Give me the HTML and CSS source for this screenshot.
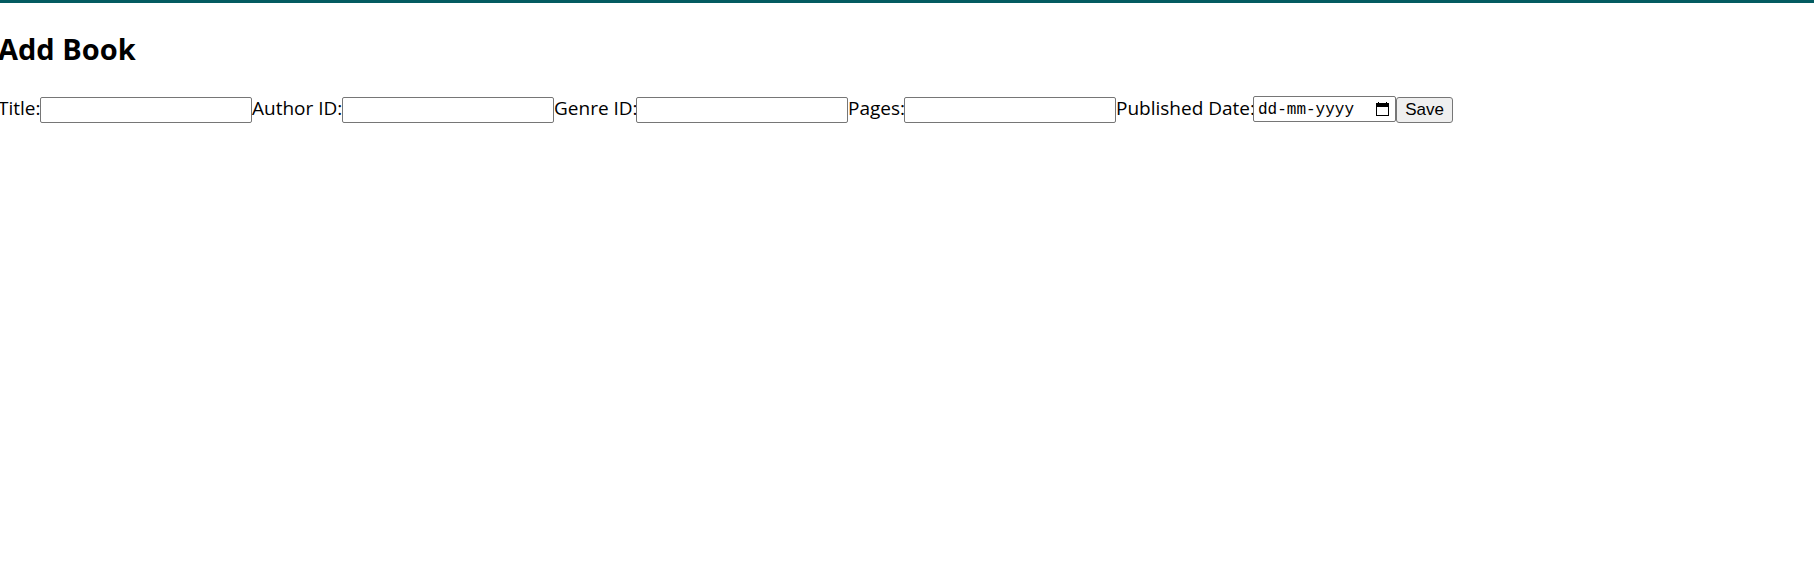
FILE: index.html
```html
<!DOCTYPE html>
<html lang="en">
<head>
<meta charset="utf-8">
<title>Add Book</title>
<link rel="stylesheet" href="styles.css">
</head>
<body class="page">
<main class="content">
<h2 class="heading">Add Book</h2>
<form class="book-form">
<label class="label label-title" for="title">Title:</label><input class="field" id="title" type="text">
<label class="label label-author" for="author">Author ID:</label><input class="field" id="author" type="text">
<label class="label label-genre" for="genre">Genre ID:</label><input class="field" id="genre" type="text">
<label class="label label-pages" for="pages">Pages:</label><input class="field" id="pages" type="text">
<label class="label label-date" for="published">Published Date:</label>
<div class="date-box">
<input class="date-input" id="published" type="text" placeholder="dd-mm-yyyy">
<button class="date-picker" type="button" aria-label="Choose date"><svg class="date-icon" viewBox="0 0 13 14" width="13" height="14"><path fill="#000" fill-rule="evenodd" d="M2 0h1v1h7V0h1v1h2v13H0V1h2zM1 5v8h11V5z"/></svg></button>
</div>
<button class="save" type="submit">Save</button>
</form>
</main>
</body>
</html>
```
FILE: styles.css
```css
.page {
  margin: 0;
  background: #fff;
  color: #000;
  font: 19px/26px "Segoe UI", "Open Sans", sans-serif;
  border-top: 3px solid #035b61;
}
.content {
  margin-left: -2px;
  padding-top: 26px;
}
.heading {
  margin: 0;
  font-size: 29px;
  line-height: 40px;
  font-weight: 700;
}
.book-form {
  display: flex;
  align-items: center;
  margin-top: 28px;
  white-space: nowrap;
}
.label {
  flex: none;
  margin-top: -4px;
}
.label-title { width: 42px; }
.label-author { width: 90px; }
.label-genre { width: 82px; }
.label-pages { width: 56px; }
.label-date { width: 137px; }
.field,
.date-box,
.save {
  box-sizing: border-box;
  flex: none;
  height: 26px;
  border: 1px solid #767676;
  border-radius: 2px;
}
.field {
  width: 212px;
  margin: 0;
  padding: 1px 3px;
  font: 16px "Liberation Sans", Arial, sans-serif;
}
.date-box {
  display: flex;
  align-items: center;
  width: 143px;
  margin-top: -2px;
}
.date-input {
  flex: 1;
  min-width: 0;
  padding: 2px 0 0 4px;
  border: 0;
  background: none;
  font: 16px "Liberation Mono", monospace;
}
.date-input::placeholder {
  color: #000;
  opacity: 1;
}
.date-picker {
  display: flex;
  padding: 0;
  margin-right: 6px;
  border: 0;
  background: none;
}
.save {
  width: 57px;
  padding: 0;
  background: #efefef;
  color: #000;
  border-radius: 3px;
  font: 17px "Liberation Sans", Arial, sans-serif;
}
```
